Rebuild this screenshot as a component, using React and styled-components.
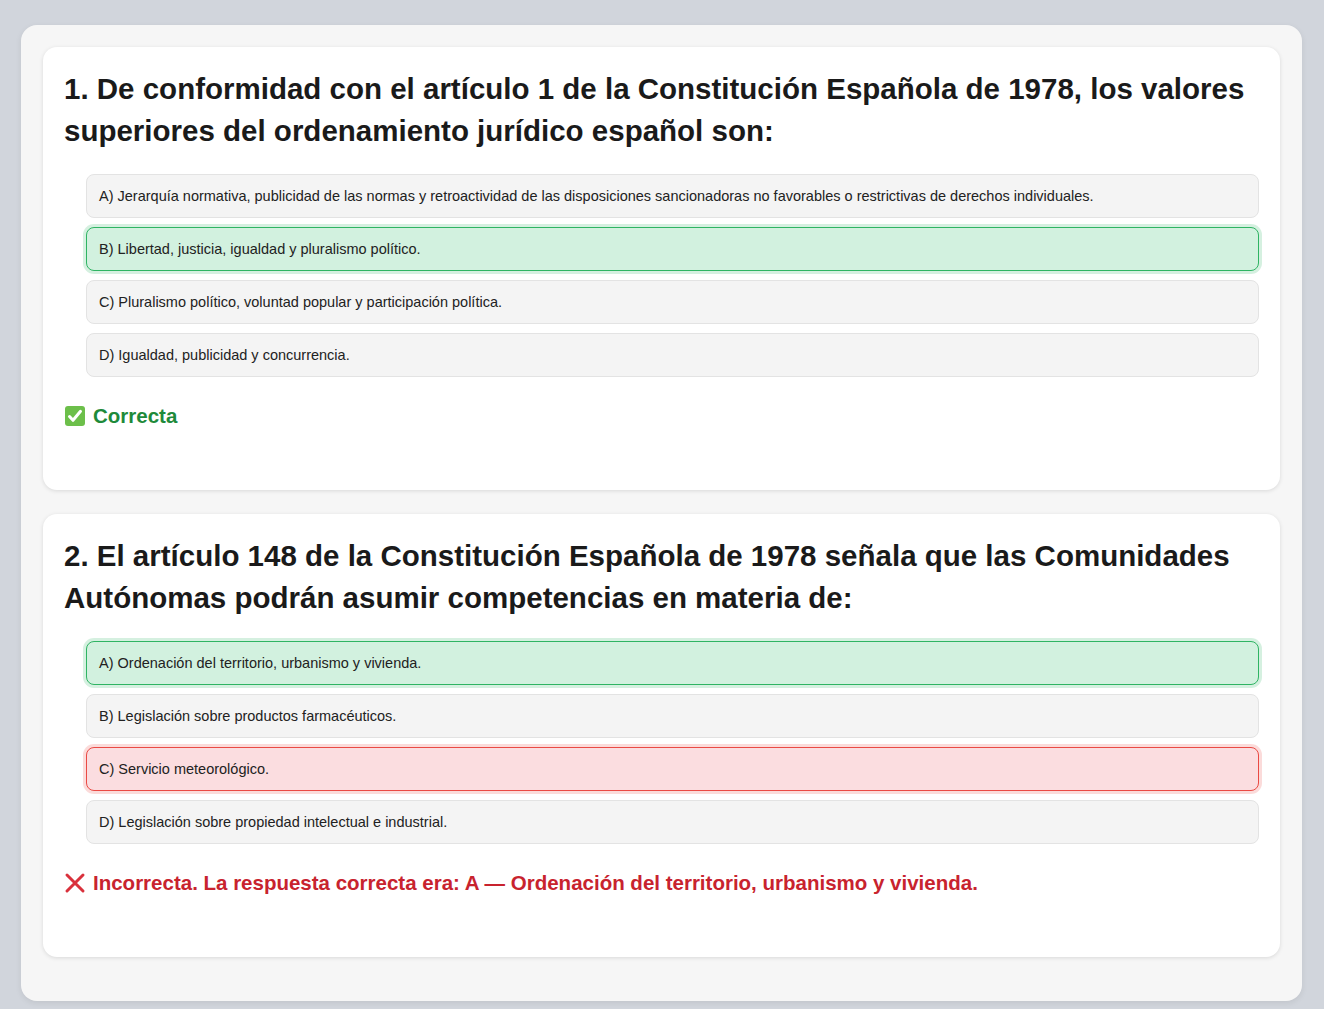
import React from 'react';
import styled, {createGlobalStyle} from 'styled-components';

const Global = createGlobalStyle`
  body {
    margin: 0;
    background: #d1d5dc;
    font-family: "Liberation Sans", Arial, sans-serif;
  }
`;

const Page = styled.div`
  padding: 25px 22px 9px 21px;
`;

const Panel = styled.div`
  background: #f6f6f6;
  border-radius: 16px;
  padding: 22px 22px 44px 22px;
  display: flex;
  flex-direction: column;
  gap: 24px;
  box-shadow: 0 2px 6px rgba(0, 0, 0, 0.08);
`;

const Card = styled.section`
  background: #fff;
  border-radius: 14px;
  padding: 21px 21px 62px 21px;
  box-shadow: 0 1px 4px rgba(0, 0, 0, 0.12);
`;

const Title = styled.h2`
  margin: 0 0 22px 0;
  font-size: 29.5px;
  line-height: 42px;
  font-weight: bold;
  color: #1a1a1a;
`;

const Options = styled.div`
  display: flex;
  flex-direction: column;
  gap: 9px;
  margin-left: 22px;
`;

const palette = {
    normal: {bg: '#f4f4f4', border: '#e3e3e3', ring: 'transparent'},
    correct: {bg: '#d2f1df', border: '#2fb463', ring: 'rgba(47,180,99,0.2)'},
    wrong: {bg: '#fbdde0', border: '#ea4a44', ring: 'rgba(234,74,68,0.2)'},
};

const Option = styled.div`
  height: 44px;
  box-sizing: border-box;
  display: flex;
  align-items: center;
  padding: 0 12px;
  font-size: 14.5px;
  color: #222;
  border-radius: 8px;
  background: ${(p) => palette[p.$state].bg};
  border: 1px solid ${(p) => palette[p.$state].border};
  box-shadow: 0 0 0 3px ${(p) => palette[p.$state].ring};
`;

const Result = styled.div`
  margin-top: 27px;
  display: flex;
  align-items: center;
  gap: 7px;
  font-size: 20.5px;
  font-weight: bold;
  color: ${(p) => (p.$ok ? '#1e8a3a' : '#c8232e')};
`;

const CheckIcon = () => (
    <svg width="22" height="22" viewBox="0 0 22 22">
        <rect x="1" y="1" width="20" height="20" rx="3" fill="#6cbf4a"/>
        <path d="M5.5 11.5l3.5 3.8 7.5-9" stroke="#fff" strokeWidth="3" fill="none" strokeLinecap="round" strokeLinejoin="round"/>
    </svg>
);

const CrossIcon = () => (
    <svg width="22" height="22" viewBox="0 0 22 22">
        <path d="M3 3l16 16M19 3L3 19" stroke="#d9313c" strokeWidth="3" strokeLinecap="round"/>
    </svg>
);

const questions = [
    {
        title: '1. De conformidad con el artículo 1 de la Constitución Española de 1978, los valores superiores del ordenamiento jurídico español son:',
        options: [
            ['A) Jerarquía normativa, publicidad de las normas y retroactividad de las disposiciones sancionadoras no favorables o restrictivas de derechos individuales.', 'normal'],
            ['B) Libertad, justicia, igualdad y pluralismo político.', 'correct'],
            ['C) Pluralismo político, voluntad popular y participación política.', 'normal'],
            ['D) Igualdad, publicidad y concurrencia.', 'normal'],
        ],
        ok: true,
        result: 'Correcta',
    },
    {
        title: '2. El artículo 148 de la Constitución Española de 1978 señala que las Comunidades Autónomas podrán asumir competencias en materia de:',
        options: [
            ['A) Ordenación del territorio, urbanismo y vivienda.', 'correct'],
            ['B) Legislación sobre productos farmacéuticos.', 'normal'],
            ['C) Servicio meteorológico.', 'wrong'],
            ['D) Legislación sobre propiedad intelectual e industrial.', 'normal'],
        ],
        ok: false,
        result: 'Incorrecta. La respuesta correcta era: A — Ordenación del territorio, urbanismo y vivienda.',
    },
];

export default function App() {
    return (
        <Page>
            <Global/>
            <Panel>
                {questions.map((q) => (
                    <Card key={q.title}>
                        <Title>{q.title}</Title>
                        <Options>
                            {q.options.map(([text, state]) => (
                                <Option key={text} $state={state}>{text}</Option>
                            ))}
                        </Options>
                        <Result $ok={q.ok}>
                            {q.ok ? <CheckIcon/> : <CrossIcon/>}
                            <span>{q.result}</span>
                        </Result>
                    </Card>
                ))}
            </Panel>
        </Page>
    );
}
